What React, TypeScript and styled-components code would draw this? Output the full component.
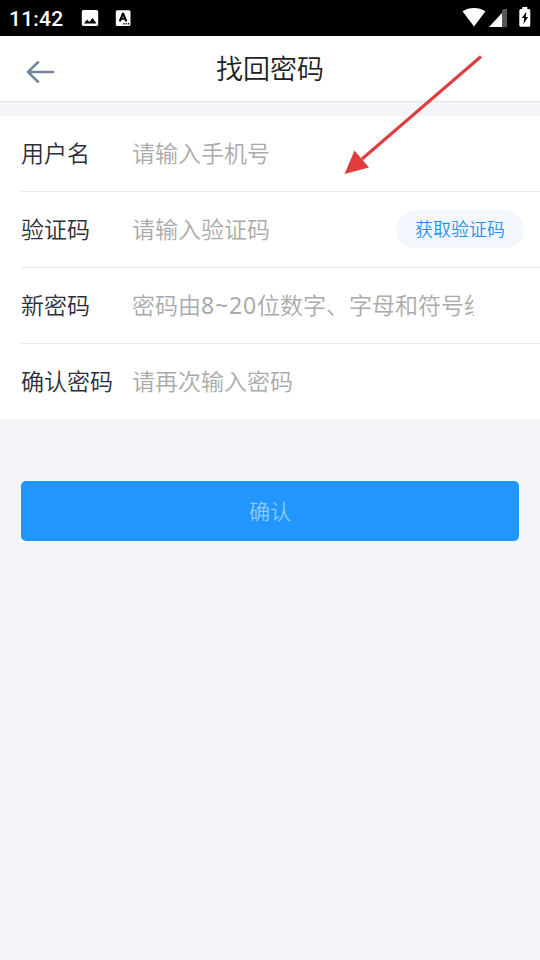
import React from 'react';
import styled, { createGlobalStyle } from 'styled-components';

const GlobalStyle = createGlobalStyle`
  * { box-sizing: border-box; }
  html, body { margin: 0; padding: 0; background: #f3f5f9; }
  body, button, input { font-family: Roboto, "Noto Sans CJK SC", sans-serif; }
`;

const Screen = styled.main`
  position: relative;
  width: 540px;
  height: 960px;
  overflow: hidden;
  background: #f3f5f9;
`;

const StatusBar = styled.div`
  display: flex;
  align-items: center;
  height: 36px;
  padding: 0 9px;
  background: #000;
  color: #fff;
`;

const Clock = styled.time`
  width: 72px;
  font: 500 21px/36px Roboto, sans-serif;
  letter-spacing: 0.2px;
  padding-top: 1px;
`;

const StatusIcon = styled.svg<{ $gap?: number }>`
  display: block;
  flex: none;
  margin-left: ${({ $gap = 0 }) => $gap}px;
`;

const SystemIcons = styled.div`
  display: flex;
  align-items: center;
  margin: -2px 0 0 auto;
`;

const Header = styled.header`
  display: grid;
  grid-template-columns: 80px 1fr 80px;
  align-items: center;
  height: 66px;
  background: #fff;
  border-bottom: 1px solid #dee1e5;
`;

const BackButton = styled.button`
  display: flex;
  padding: 7px 0 0 24px;
  border: 0;
  background: none;
`;

const Title = styled.h1`
  margin: 0;
  padding-top: 2px;
  text-align: center;
  color: #222;
  font-size: 27px;
  line-height: 40px;
  font-weight: 350;
`;

const Form = styled.form`
  margin: 0;
`;

const Fields = styled.div`
  margin-top: 14px;
  padding-left: 21px;
  background: #fff;
`;

const Row = styled.div`
  display: flex;
  align-items: center;
  height: 76px;
  border-bottom: 1px solid #e9eaec;

  &:last-child {
    height: 75px;
    border-bottom: 0;
  }
`;

const Label = styled.label`
  flex: none;
  width: 111px;
  padding-top: 2px;
  color: #2b2f3a;
  font-size: 23px;
  line-height: 34px;
  font-weight: 350;
`;

const InputBox = styled.div<{ $width: number }>`
  display: grid;
  align-items: center;
  width: ${({ $width }) => $width}px;
  height: 40px;
  overflow: hidden;
  font-size: 23px;
  font-weight: 350;

  > * {
    grid-area: 1 / 1;
  }
`;

const Input = styled.input`
  width: 100%;
  height: 40px;
  padding: 0;
  border: 0;
  outline: 0;
  background: transparent;
  font: inherit;
`;

const Hint = styled.span`
  padding-top: 2px;
  color: #aaa;
  line-height: 34px;
  white-space: nowrap;
  pointer-events: none;

  ${Input}:not(:placeholder-shown) + & {
    visibility: hidden;
  }
`;

const Range = styled.span`
  font-family: "Noto Sans", sans-serif;
  font-weight: 400;
  line-height: 1;
  letter-spacing: 0.85px;
`;

const CodeButton = styled.button`
  width: 128px;
  height: 38px;
  margin: 0 16px 2px auto;
  padding: 0 0 2px;
  border: 0;
  border-radius: 19px;
  background: #f4f8fe;
  color: #2292f4;
  font-size: 18px;
  font-weight: 350;
`;

const Submit = styled.button`
  display: block;
  width: 498px;
  height: 60px;
  margin: 62px 21px 0;
  padding: 0 0 2px;
  border: 0;
  border-radius: 5px;
  background: #2196ff;
  color: #90caff;
  font-size: 21px;
  font-weight: 350;
`;

const Pointer = styled.svg`
  position: absolute;
  left: 340px;
  top: 50px;
  pointer-events: none;
`;

const fields = [
  { id: 'user', label: '用户名', hint: '请输入手机号', width: 342 },
  { id: 'code', label: '验证码', hint: '请输入验证码', width: 240, code: true },
  { id: 'password', label: '新密码', hint: <>密码由<Range>8~20</Range>位数字、字母和符号组成</>, width: 342 },
  { id: 'confirm', label: '确认密码', hint: '请再次输入密码', width: 342 },
];

export default function App() {
  return (
    <Screen>
      <GlobalStyle />
      <StatusBar>
        <Clock>11:42</Clock>
        <StatusIcon width="18" height="18" viewBox="0 0 18 18">
          <path fill="#fff" fillRule="evenodd" d="M2.5 1h13A1.7 1.7 0 0 1 17.2 2.7v12.6a1.7 1.7 0 0 1-1.7 1.7h-13a1.7 1.7 0 0 1-1.7-1.7V2.7A1.7 1.7 0 0 1 2.5 1ZM3 14.5h12.5l-4-5.4-3.2 4-2.2-2.6Z" />
        </StatusIcon>
        <StatusIcon $gap={16} width="17" height="18" viewBox="0 0 17 18">
          <rect x="0.8" y="1.3" width="14.7" height="15.7" rx="1.5" fill="#fff" />
          <path fill="none" stroke="#000" strokeWidth="2.1" d="m4.8 12.3 3-7.5h.5l3 7.500M5.8 9.8h4.5" />
          <path stroke="#000" strokeWidth="1.4" strokeDasharray="1.3 1" d="M8.3 14.8h6" />
        </StatusIcon>
        <SystemIcons>
          <StatusIcon width="24" height="20" viewBox="0 0 24 20">
            <path fill="#fff" d="M.5 4.3C7-.2 17-.2 23.5 4.3L12 19.5Z" />
          </StatusIcon>
          <StatusIcon $gap={2} width="20" height="20" viewBox="0 0 20 20">
            <path fill="#fff" d="M1 20 14 6v14Z" />
            <path fill="#555" d="M14 6V3.500l2-1.500h3v18h-5Z" />
          </StatusIcon>
          <StatusIcon $gap={11} width="12" height="20" viewBox="0 0 12 20">
            <path fill="#fff" d="M3.3 0h5v2h1.4Q11.3 2 11.3 3.5v14.8q0 1.5-1.5 1.5h-8Q.3 19.8.3 18.3V3.5Q.3 2 1.8 2h1.5Z" />
            <path fill="#000" d="M7.3 4.8 2.8 11h2.4l-.7 6 4.6-7H6.8Z" />
          </StatusIcon>
        </SystemIcons>
      </StatusBar>
      <Header>
        <BackButton type="button" aria-label="返回">
          <svg width="32" height="26" viewBox="0 0 32 26" fill="none" stroke="#74879a" strokeWidth="2.6" strokeLinecap="round" strokeLinejoin="round">
            <path d="M29 13H4M14 3.3 4 13l10 9.7" />
          </svg>
        </BackButton>
        <Title>找回密码</Title>
      </Header>
      <Form>
        <Fields>
          {fields.map((field) => (
            <Row key={field.id}>
              <Label htmlFor={field.id}>{field.label}</Label>
              <InputBox $width={field.width}>
                <Input id={field.id} placeholder=" " />
                <Hint>{field.hint}</Hint>
              </InputBox>
              {field.code && <CodeButton type="button">获取验证码</CodeButton>}
            </Row>
          ))}
        </Fields>
        <Submit type="button">确认</Submit>
      </Form>
      <Pointer width="145" height="130" viewBox="0 0 145 130" aria-hidden="true">
        <path d="M141 6.5 22 109" stroke="#e03c3e" strokeWidth="3" />
        <path d="m4.5 124 10-23.5L29 117.500Z" fill="#e03c3e" />
      </Pointer>
    </Screen>
  );
}
